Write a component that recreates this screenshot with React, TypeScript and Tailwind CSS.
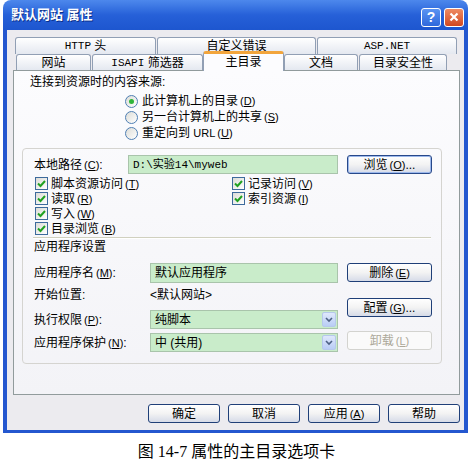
import React from 'react';

const Key = ({ k }: { k: string }) => (
  <span className="ml-[2px] text-[11px]">
    (<span className="underline underline-offset-[1px]">{k}</span>)
  </span>
);

const Mono = ({ children }: { children: React.ReactNode }) => (
  <span className="font-['Liberation_Mono',monospace] text-[11px]">{children}</span>
);

const Tab = ({ children, className = '' }: { children: React.ReactNode; className?: string }) => (
  <div
    className={`flex items-center justify-center rounded-t-[3px] border border-b-0 border-[#919fb4] bg-gradient-to-b from-white to-[#e4e8f0] ${className}`}
  >
    {children}
  </div>
);

const Radio = ({ checked, children }: { checked?: boolean; children: React.ReactNode }) => (
  <div className="flex h-[16px] items-center">
    <span className="flex h-[13px] w-[13px] items-center justify-center rounded-full border border-[#4f7fb4] bg-gradient-to-br from-[#dcdcd7] to-white">
      {checked && <span className="h-[5px] w-[5px] rounded-full bg-[#2fb53a]" />}
    </span>
    <span className="ml-[4px]">{children}</span>
  </div>
);

const Check = ({ children }: { children: React.ReactNode }) => (
  <div className="flex h-[15px] items-center">
    <span className="flex h-[13px] w-[13px] items-center justify-center border border-[#3d6a9c] bg-gradient-to-br from-[#dcdcd7] to-white">
      <svg width="9" height="9" viewBox="0 0 9 9">
        <path d="M1 4.5 L3.5 7 L8 2" stroke="#21a121" strokeWidth="2" fill="none" />
      </svg>
    </span>
    <span className="ml-[3px]">{children}</span>
  </div>
);

const Btn = ({
  children,
  className = '',
  w = 'w-[85px]',
  disabled,
}: {
  children: React.ReactNode;
  className?: string;
  w?: string;
  disabled?: boolean;
}) => (
  <div
    className={`flex h-[19px] ${w} items-center justify-center rounded-[3px] border ${
      disabled
        ? 'border-[#d3d3cf] bg-[#fafafa] text-[#aca899]'
        : 'border-[#1f3f78] bg-gradient-to-b from-white via-[#f3f3f3] to-[#d6dbe8]'
    } ${className}`}
  >
    {children}
  </div>
);

const Field = ({ children, className = '' }: { children: React.ReactNode; className?: string }) => (
  <div className={`flex items-center border border-[#a9c4ab] bg-[#c9ecca] pl-[4px] ${className}`}>
    {children}
  </div>
);

const Combo = ({ children }: { children: React.ReactNode }) => (
  <div className="flex h-[19px] w-[188px] items-center border border-[#a9c4ab] bg-[#c9ecca] pl-[4px]">
    <span className="flex-1">{children}</span>
    <span className="mr-[1px] flex h-[15px] w-[14px] items-center justify-center rounded-[2px] border border-[#b6c8ec] bg-gradient-to-b from-[#dfe8fc] to-[#b9cdf5]">
      <svg width="8" height="6" viewBox="0 0 8 6">
        <path d="M1 1 L4 4 L7 1" stroke="#4d6185" strokeWidth="1.6" fill="none" />
      </svg>
    </span>
  </div>
);

export default function App() {
  return (
    <div className="h-[462px] w-[473px] bg-white font-['Liberation_Sans','Noto_Sans_CJK_SC',sans-serif] text-[12px] leading-[16px] text-black">
      <div className="ml-[3px] w-[465px]">
        {/* title bar */}
        <div className="flex h-[30px] items-center rounded-t-[8px] bg-gradient-to-b from-[#4d88ec] via-[#2660d8] to-[#1d56cf] pl-[8px] pr-[4px]">
          <span className="flex-1 text-[13px] font-bold text-white [text-shadow:1px_1px_0_#0a2f8a]">默认网站 属性</span>
          <div className="mt-[4px] flex gap-[3px]">
            <div className="flex h-[19px] w-[20px] items-center justify-center rounded-[3px] border border-white bg-gradient-to-b from-[#5b93f2] to-[#2f68dc] text-[14px] font-bold text-white">
              ?
            </div>
            <div className="flex h-[19px] w-[20px] items-center justify-center rounded-[3px] border border-white bg-gradient-to-b from-[#ee8a62] to-[#d2471d]">
              <svg width="10" height="10" viewBox="0 0 10 10">
                <path d="M1.5 1.5 L8.5 8.5 M8.5 1.5 L1.5 8.5" stroke="white" strokeWidth="2.2" />
              </svg>
            </div>
          </div>
        </div>

        {/* body */}
        <div className="border-x-[4px] border-b-[3px] border-[#2457cf] bg-[#ecebef] pb-[7px] pt-[7px]">
          {/* tabs */}
          <div className="ml-[8px] flex h-[17px] gap-[1px]">
            <Tab className="w-[141px]">
              <Mono>HTTP</Mono>&nbsp;头
            </Tab>
            <Tab className="w-[159px]">自定义错误</Tab>
            <Tab className="w-[140px]">
              <Mono>ASP.NET</Mono>
            </Tab>
          </div>
          <div className="ml-[9px] flex h-[16px] items-end">
            <Tab className="h-[16px] w-[75px]">网站</Tab>
            <Tab className="ml-[1px] h-[16px] w-[111px]">
              <Mono>ISAPI</Mono>&nbsp;筛选器
            </Tab>
            <div className="relative z-10 -mb-[1px] flex h-[20px] w-[81px] items-center justify-center rounded-t-[3px] border-x border-t-[3px] border-x-[#919fb4] border-t-[#f2a53c] bg-[#fcfcfe] pb-[1px]">
              主目录
            </div>
            <Tab className="h-[16px] w-[74px]">文档</Tab>
            <Tab className="ml-[1px] h-[16px] w-[88px]">目录安全性</Tab>
          </div>

          {/* panel */}
          <div className="ml-[6px] h-[325px] w-[447px] border border-[#919b9c] bg-gradient-to-b from-[#fcfcfe] to-[#f3f3f7]">
            <div className="mt-[3px] pl-[16px]">连接到资源时的内容来源:</div>
            <div className="ml-[111px] mt-[3px]">
              <Radio checked>
                此计算机上的目录
                <Key k="D" />
              </Radio>
              <Radio>
                另一台计算机上的共享
                <Key k="S" />
              </Radio>
              <Radio>
                重定向到 <span className="text-[11px]">URL</span>
                <Key k="U" />
              </Radio>
            </div>

            {/* group */}
            <div className="ml-[8px] mt-[7px] h-[216px] w-[420px] rounded-[4px] border border-[#d5d4d0]">
              <div className="mt-[6px] flex items-center pl-[11px]">
                <span className="w-[94px]">
                  本地路径
                  <Key k="C" />:
                </span>
                <Field className="h-[19px] w-[210px]">
                  <span className="font-['Liberation_Mono','Noto_Sans_CJK_SC',monospace] text-[11px]">D:\实验14\myweb</span>
                </Field>
                <Btn className="ml-[9px] border-[#28498a] shadow-[inset_0_0_0_1px_#9cb8ec]">
                  浏览
                  <Key k="O" />
                  ...
                </Btn>
              </div>

              <div className="mt-[2px] grid grid-cols-[197px_auto] pl-[12px]">
                <Check>
                  脚本资源访问
                  <Key k="T" />
                </Check>
                <Check>
                  记录访问
                  <Key k="V" />
                </Check>
                <Check>
                  读取
                  <Key k="R" />
                </Check>
                <Check>
                  索引资源
                  <Key k="I" />
                </Check>
                <Check>
                  写入
                  <Key k="W" />
                </Check>
                <div />
                <Check>
                  目录浏览
                  <Key k="B" />
                </Check>
              </div>

              <div className="ml-[10px] mt-[1px] h-[2px] w-[398px] border-t border-[#d0d0bf] border-b-white border-b" />

              <div className="mt-[1px] h-[15px] pl-[11px] leading-[15px]">应用程序设置</div>

              <div className="mt-[8px] flex pl-[11px]">
                <div className="w-[304px]">
                  <div className="flex h-[20px] items-center">
                    <span className="w-[116px]">
                      应用程序名
                      <Key k="M" />:
                    </span>
                    <Field className="h-[20px] w-[188px]">默认应用程序</Field>
                  </div>
                  <div className="mt-[4px] flex h-[16px] items-center">
                    <span className="w-[116px]">开始位置:</span>
                    <span>&lt;默认网站&gt;</span>
                  </div>
                  <div className="mt-[7px] flex h-[19px] items-center">
                    <span className="w-[116px]">
                      执行权限
                      <Key k="P" />:
                    </span>
                    <Combo>纯脚本</Combo>
                  </div>
                  <div className="mt-[4px] flex h-[19px] items-center">
                    <span className="w-[116px]">
                      应用程序保护
                      <Key k="N" />:
                    </span>
                    <Combo>中 (共用)</Combo>
                  </div>
                </div>
                <div className="ml-[9px]">
                  <Btn>
                    删除
                    <Key k="E" />
                  </Btn>
                  <Btn className="mt-[16px]">
                    配置
                    <Key k="G" />
                    ...
                  </Btn>
                  <Btn disabled className="mt-[14px]">
                    卸载
                    <Key k="L" />
                  </Btn>
                </div>
              </div>
            </div>
          </div>

          {/* buttons */}
          <div className="mt-[9px] flex justify-end gap-[8px] pr-[4px]">
            <Btn w="w-[72px]">确定</Btn>
            <Btn w="w-[72px]">取消</Btn>
            <Btn w="w-[72px]">
              应用
              <Key k="A" />
            </Btn>
            <Btn w="w-[72px]">帮助</Btn>
          </div>
        </div>
      </div>

      <div className="mt-[9px] text-center font-['Liberation_Serif','Noto_Sans_CJK_SC',serif] text-[16px] leading-[20px]">
        图 14-7 属性的主目录选项卡
      </div>
    </div>
  );
}
